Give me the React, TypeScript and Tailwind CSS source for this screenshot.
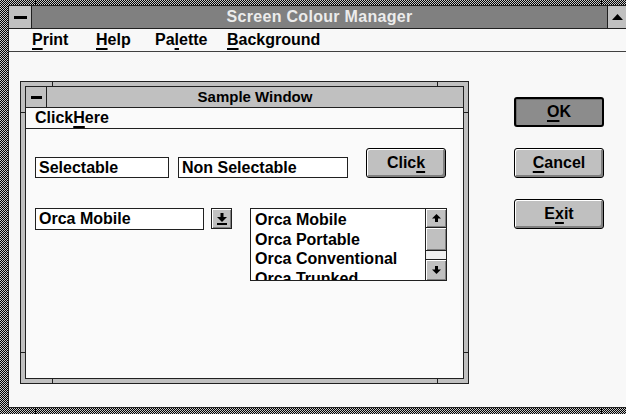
import React from "react";

// 1px checkerboard used for the thick sizing frame of the main window
const dither =
  "bg-[repeating-conic-gradient(#000_0_25%,#c8c8c8_0_50%)] bg-[length:2px_2px]";

function Key({ children }: { children: React.ReactNode }) {
  return <span className="underline underline-offset-[3px] decoration-[1.5px]">{children}</span>;
}

function UpArrow() {
  return (
    <svg width="11" height="7" viewBox="0 0 11 7">
      <polygon points="5.5,0 11,6 0,6" fill="#000" />
    </svg>
  );
}

function ScrollArrow({ down }: { down?: boolean }) {
  return (
    <svg width="9" height="10" viewBox="0 0 9 10" className={down ? "rotate-180" : ""}>
      <polygon points="4.5,1 9,5.5 0,5.5" fill="#000" />
      <rect x="3" y="5" width="3" height="4" fill="#000" />
    </svg>
  );
}

function DropArrow() {
  return (
    <svg width="10" height="13" viewBox="0 0 10 13">
      <rect x="3.5" y="1" width="3" height="4" fill="#000" />
      <polygon points="0,5 10,5 5,10" fill="#000" />
      <rect x="0" y="11" width="10" height="2" fill="#000" />
    </svg>
  );
}

function Button({ children, def }: { children: React.ReactNode; def?: boolean }) {
  if (def) {
    return (
      <div className="w-[90px] h-[30px] border-2 border-black rounded-[3px] bg-[#8c8c8c] shadow-[inset_1px_1px_#6c6c6c] flex items-center justify-center">
        {children}
      </div>
    );
  }
  return (
    <div className="w-[90px] h-[30px] border border-black rounded-[3px] bg-[#c0c0c0] shadow-[inset_1px_1px_#fff,inset_-2px_-2px_#808080] flex items-center justify-center">
      {children}
    </div>
  );
}

function EditBox({ text, width }: { text: string; width: string }) {
  return (
    <div className={`${width} h-[21px] border border-[#202020] bg-white flex items-center pl-[3px] leading-none`}>
      {text}
    </div>
  );
}

function SampleWindow() {
  const items = ["Orca Mobile", "Orca Portable", "Orca Conventional", "Orca Trunked"];
  return (
    <div className="relative w-[449px] h-[303px] mt-[29px] border border-[#202020] bg-[#c0c0c0] p-[4px] flex">
      {/* sizing ticks on the frame */}
      <div className="absolute left-[31px] top-0 w-px h-[5px] bg-[#202020]" />
      <div className="absolute left-[416px] top-0 w-px h-[5px] bg-[#202020]" />
      <div className="absolute left-[31px] bottom-0 w-px h-[5px] bg-[#202020]" />
      <div className="absolute left-[416px] bottom-0 w-px h-[5px] bg-[#202020]" />
      <div className="absolute left-0 top-[30px] w-[5px] h-px bg-[#202020]" />
      <div className="absolute right-0 top-[30px] w-[5px] h-px bg-[#202020]" />
      <div className="absolute left-0 top-[270px] w-[5px] h-px bg-[#202020]" />
      <div className="absolute right-0 top-[270px] w-[5px] h-px bg-[#202020]" />

      <div className="flex-1 flex flex-col border border-[#202020] bg-[#fafafa]">
        <div className="h-[21px] flex border-b border-[#202020] bg-[#c0c0c0]">
          <div className="w-[21px] border-r border-[#202020] flex items-center justify-center">
            <div className="w-[11px] h-[3px] bg-black" />
          </div>
          <div className="flex-1 text-center text-[15px] leading-[20px] text-black">Sample Window</div>
        </div>
        <div className="h-[21px] border-b border-[#202020] pl-[9px] leading-[20px]">
          Click<Key>H</Key>ere
        </div>

        <div className="flex-1 pt-[19px] pl-[9px] flex flex-col">
          <div className="flex items-end">
            <EditBox text="Selectable" width="w-[134px]" />
            <div className="ml-[9px]">
              <EditBox text="Non Selectable" width="w-[170px]" />
            </div>
            <div className="ml-[18px] w-[80px] h-[30px] border border-black rounded-[3px] bg-[#c0c0c0] shadow-[inset_1px_1px_#fff,inset_-2px_-2px_#808080] flex items-center justify-center">
              Clic<Key>k</Key>
            </div>
          </div>

          <div className="flex items-start mt-[30px]">
            <div className="w-[169px] h-[22px] border border-[#202020] bg-white flex items-center pl-[3px]">
              Orca Mobile
            </div>
            <div className="ml-[7px] w-[21px] h-[21px] border border-[#202020] bg-[#c0c0c0] shadow-[inset_1px_1px_#fff,inset_-1px_-1px_#808080] flex items-center justify-center">
              <DropArrow />
            </div>
            <div className="ml-[18px] w-[197px] h-[73px] border border-[#202020] bg-white flex overflow-hidden">
              <div className="flex-1 pl-[4px] pt-[1px] overflow-hidden">
                {items.map((it) => (
                  <div key={it} className="h-[19.5px] leading-[19.5px] whitespace-nowrap">
                    {it}
                  </div>
                ))}
              </div>
              <div className="w-[21px] border-l border-[#202020] flex flex-col bg-[#f0f0f0]">
                <div className="h-[19px] border-b border-[#202020] bg-[#c0c0c0] shadow-[inset_1px_1px_#fff,inset_-1px_-1px_#808080] flex items-center justify-center">
                  <ScrollArrow />
                </div>
                <div className="h-[23px] border-b border-[#202020] bg-[#c0c0c0] shadow-[inset_1px_1px_#fff,inset_-1px_-1px_#808080]" />
                <div className="flex-1 border-b border-[#202020]" />
                <div className="h-[20px] bg-[#c0c0c0] shadow-[inset_1px_1px_#fff,inset_-1px_-1px_#808080] flex items-center justify-center">
                  <ScrollArrow down />
                </div>
              </div>
            </div>
          </div>
        </div>
      </div>
    </div>
  );
}

export default function App() {
  return (
    <div
      className={`relative w-[626px] h-[414px] overflow-hidden ${dither} pt-[5px] pl-[8px] pb-[6px] flex flex-col font-['Liberation_Sans',Arial,sans-serif] font-bold text-[16px] text-black`}
    >
      {/* sizing ticks in the outer frame */}
      <div className="absolute left-[35px] top-0 w-px h-[5px] bg-black" />
      <div className="absolute left-[601px] top-0 w-px h-[5px] bg-black" />
      <div className="absolute left-[35px] bottom-0 w-px h-[6px] bg-black" />
      <div className="absolute left-[601px] bottom-0 w-px h-[6px] bg-black" />

      <div className="flex-1 flex flex-col border-l border-t border-b border-[#202020] bg-[#f8f8f8]">
        <div className="h-[23px] flex border-b border-[#202020]">
          <div className="w-[23px] bg-[#c0c0c0] border-r border-[#202020] flex items-center justify-center">
            <div className="w-[13px] h-[3px] bg-black" />
          </div>
          <div className="flex-1 bg-[#808080] text-[#ececec] text-center leading-[22px] tracking-[0.3px]">
            Screen Colour Manager
          </div>
          <div className="w-[19px] bg-[#c0c0c0] border-l border-[#202020] flex items-center justify-center">
            <UpArrow />
          </div>
        </div>

        <div className="h-[23px] flex items-center border-b border-[#404040] pl-[23px] leading-none">
          <span className="w-[64px]">
            <Key>P</Key>rint
          </span>
          <span className="w-[59px]">
            <Key>H</Key>elp
          </span>
          <span className="w-[72px]">
            Pa<Key>l</Key>ette
          </span>
          <span>
            <Key>B</Key>ackground
          </span>
        </div>

        <div className="flex-1 flex items-start pl-[11px]">
          <SampleWindow />
          <div className="ml-[45px] mt-[45px] flex flex-col gap-[21px]">
            <Button def>
              <Key>O</Key>K
            </Button>
            <Button>
              <Key>C</Key>ancel
            </Button>
            <Button>
              E<Key>x</Key>it
            </Button>
          </div>
        </div>
      </div>
    </div>
  );
}
